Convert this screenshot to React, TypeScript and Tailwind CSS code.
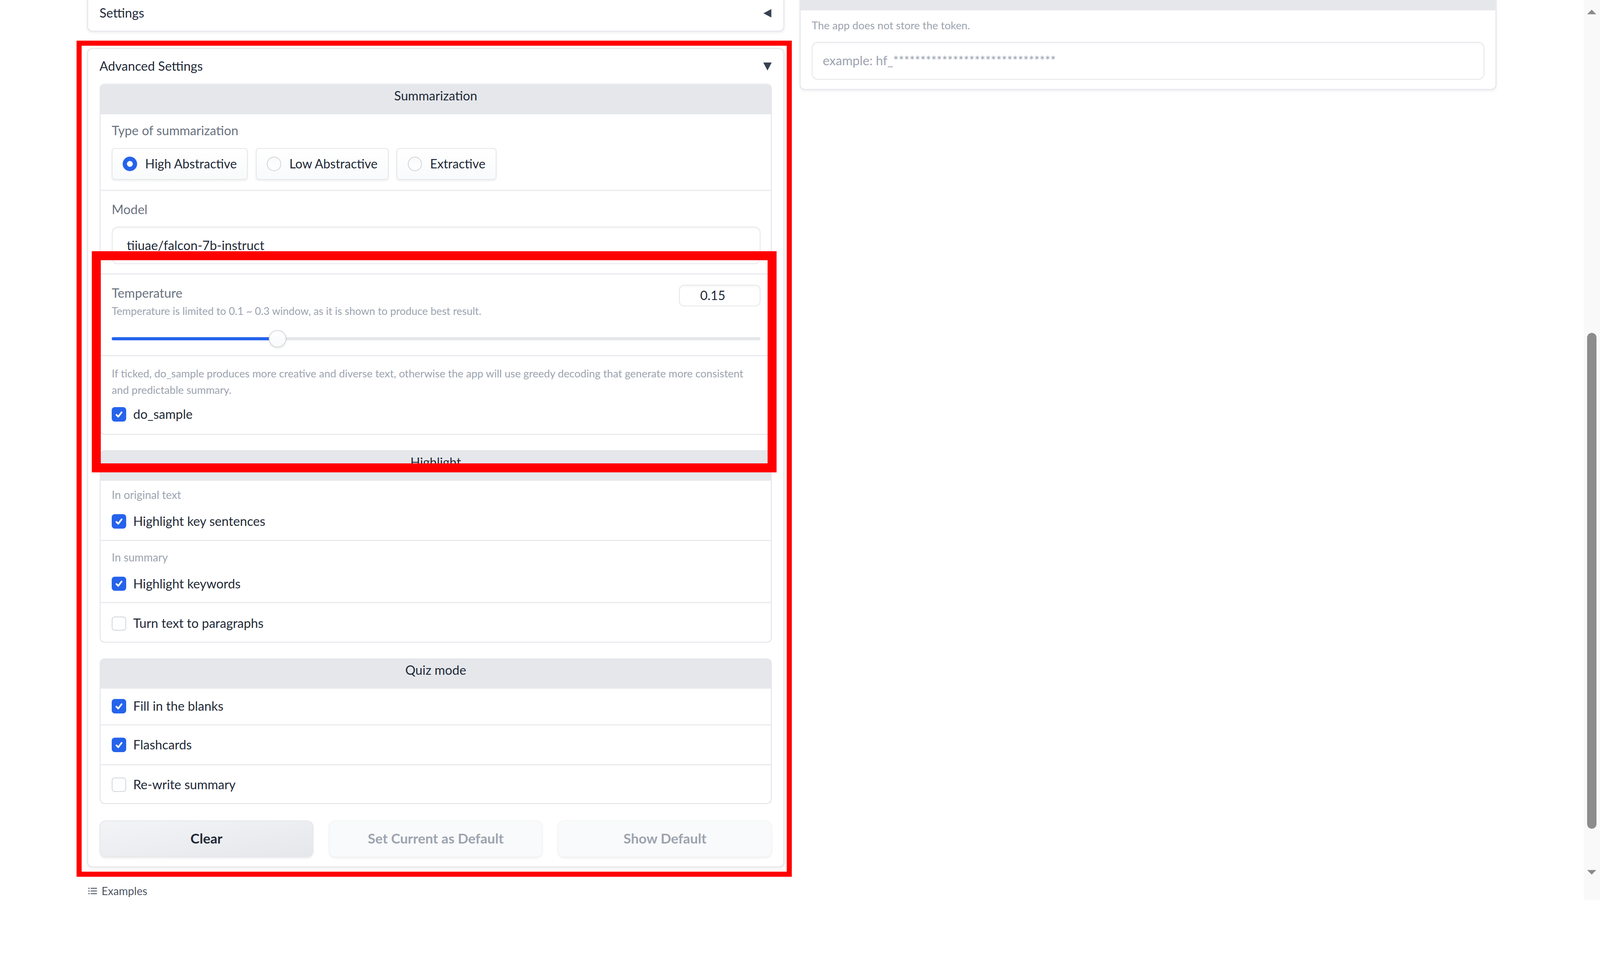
import React, { useEffect, useState } from "react";

// the layout is drawn on a 1568px wide sheet and zoomed to fill the window
const SHEET_W = 1568;

function useSheetZoom() {
  const [zoom, setZoom] = useState(() => (typeof window === "undefined" ? 1 : window.innerWidth / SHEET_W));
  useEffect(() => {
    const onResize = () => setZoom(window.innerWidth / SHEET_W);
    window.addEventListener("resize", onResize);
    return () => window.removeEventListener("resize", onResize);
  }, []);
  return zoom;
}

function Caret({ dir }: { dir: "left" | "down" }) {
  if (dir === "left") {
    return (
      <svg viewBox="0 0 10 10" className="h-[10px] w-[9px]" fill="#374151">
        <path d="M9.2 0.4 L0.6 5 L9.2 9.6 Z" />
      </svg>
    );
  }
  return (
    <svg viewBox="0 0 10 10" className="h-[9px] w-[9px]" fill="#374151">
      <path d="M0.4 0.8 L9.6 0.8 L5 9.6 Z" />
    </svg>
  );
}

function Checkbox({ label, checked }: { label: string; checked?: boolean }) {
  return (
    <div className="flex h-[16px] items-center gap-[7px]">
      {checked ? (
        <span className="flex h-[14px] w-[14px] items-center justify-center rounded-[3px] bg-[#2563eb]">
          <svg viewBox="0 0 16 16" className="h-[12px] w-[12px]" fill="none" stroke="#ffffff" strokeWidth="2.2" strokeLinecap="round" strokeLinejoin="round">
            <path d="M4.6 8.6 L7 11 L11.4 5.2" />
          </svg>
        </span>
      ) : (
        <span className="h-[14px] w-[14px] rounded-[3px] border border-[#d1d5db] bg-white" />
      )}
      <span className="text-[12.5px] text-[#1f2937]">{label}</span>
    </div>
  );
}

function Radio({ label, checked }: { label: string; checked?: boolean }) {
  return (
    <div className="flex h-[31px] items-center gap-[8px] rounded-[3px] border border-[#e5e7eb] bg-gradient-to-b from-white to-[#f9fafb] px-[10px] shadow-[0_1px_2px_rgba(0,0,0,0.07)]">
      {checked ? (
        <span className="h-[14px] w-[14px] rounded-full border-[4.5px] border-[#2563eb] bg-white" />
      ) : (
        <span className="h-[14px] w-[14px] rounded-full border border-[#d1d5db] bg-gradient-to-b from-[#f9fafb] to-white" />
      )}
      <span className="text-[12.3px] text-[#1f2937]">{label}</span>
    </div>
  );
}

function Group({ title, children }: { title: string; children: React.ReactNode }) {
  return (
    <div className="rounded-[5px] bg-white p-px shadow-[inset_0_0_0_1px_#e5e7eb]">
      <div className="overflow-hidden rounded-[4px]">
        <div className="flex h-[28px] items-center justify-center bg-[#e5e7eb] pb-[6px] text-[12.5px] text-[#1f2937]">{title}</div>
        {children}
      </div>
    </div>
  );
}

function Block({ className, children }: { className: string; children: React.ReactNode }) {
  return <div className={`pl-[11px] pr-[10px] shadow-[inset_0_1px_0_#e5e7eb] ${className}`}>{children}</div>;
}

function Scrollbar() {
  return (
    <div className="flex w-[16px] shrink-0 flex-col items-center bg-[#f9f9f9]">
      <svg viewBox="0 0 10 5" className="mt-[9px] h-[5px] w-[9px]" fill="#8b8b8b">
        <path d="M0 5 L5 0 L10 5 Z" />
      </svg>
      <div className="mt-[312px] h-[486px] w-[9px] rounded-full bg-[#8c8c8c]" />
      <svg viewBox="0 0 10 5" className="mt-[40px] h-[5px] w-[9px]" fill="#8b8b8b">
        <path d="M0 0 L10 0 L5 5 Z" />
      </svg>
    </div>
  );
}

export default function App() {
  const zoom = useSheetZoom();
  return (
    <div
      className="relative flex h-[882px] w-[1568px] overflow-hidden bg-white text-[#1f2937] [font-family:Lato,'Liberation_Sans',sans-serif]"
      style={{ zoom }}
    >
      <div className="min-w-0 flex-1 overflow-hidden">
        <div className="mx-auto flex w-[1381px] items-start gap-[15px]">
          {/* left column */}
          <div className="-mt-[5px] flex w-[683px] shrink-0 flex-col">
            <div className="rounded-[5px] bg-white px-[12px] py-px shadow-[inset_0_0_0_1px_#e5e7eb,0_1px_3px_rgba(0,0,0,0.07)]">
              <div className="flex h-[34px] items-center justify-between text-[12.5px]">
                <span>Settings</span>
                <Caret dir="left" />
              </div>
            </div>

            <div className="mt-[16px] rounded-[5px] bg-white px-[12px] pb-[10px] pt-px shadow-[inset_0_0_0_1px_#e5e7eb,0_1px_3px_rgba(0,0,0,0.07)]">
              <div className="flex h-[34px] items-center justify-between text-[12.5px]">
                <span>Advanced Settings</span>
                <Caret dir="down" />
              </div>

              <div className="flex flex-col gap-[15px]">
                <Group title="Summarization">
                  <Block className="pb-[10px] pt-[9px]">
                    <div className="text-[12.5px] leading-[16px] text-[#6b7280]">Type of summarization</div>
                    <div className="mt-[9px] flex gap-[8px]">
                      <Radio label="High Abstractive" checked />
                      <Radio label="Low Abstractive" />
                      <Radio label="Extractive" />
                    </div>
                  </Block>
                  <Block className="pb-[9px] pt-[11px]">
                    <div className="text-[12.5px] leading-[16px] text-[#6b7280]">Model</div>
                    <div className="mt-[9px] flex h-[37px] items-center rounded-[6px] border border-[#e5e7eb] bg-white px-[14px] text-[12.5px] shadow-[inset_0_1px_2px_rgba(0,0,0,0.04)]">
                      tiiuae/falcon-7b-instruct
                    </div>
                  </Block>
                  <Block className="pb-[7px] pt-[11px]">
                    <div className="flex items-start justify-between">
                      <div>
                        <div className="text-[12.5px] leading-[16px] text-[#6b7280]">Temperature</div>
                        <div className="mt-[3px] text-[10.3px] leading-[14px] text-[#9ca3af]">
                          Temperature is limited to 0.1 ~ 0.3 window, as it is shown to produce best result.
                        </div>
                      </div>
                      <div className="flex h-[21px] w-[80px] items-center justify-center rounded-[5px] border border-[#e5e7eb] bg-white pr-[14px] text-[12.5px] text-[#1f2937] shadow-[inset_0_1px_2px_rgba(0,0,0,0.04)]">
                        0.15
                      </div>
                    </div>
                    <div className="relative mt-[11px] h-[18px]">
                      <div className="absolute left-0 right-0 top-[7.5px] h-[3px] rounded-full bg-[#e5e7eb]" />
                      <div className="absolute left-0 top-[7.5px] h-[3px] w-[156px] rounded-full bg-[#2563eb]" />
                      <div className="absolute left-[154px] top-[0.5px] h-[17px] w-[17px] rounded-full border border-[#d1d5db] bg-gradient-to-b from-white to-[#f9fafb] shadow-[0_1px_2px_rgba(0,0,0,0.1)]" />
                    </div>
                  </Block>
                  <Block className="pb-[11px] pt-[10px]">
                    <div className="text-[10.45px] leading-[16px] text-[#9ca3af]">
                      If ticked, do_sample produces more creative and diverse text, otherwise the app will use greedy decoding that generate more consistent
                      <br />
                      and predictable summary.
                    </div>
                    <div className="mt-[8px]">
                      <Checkbox label="do_sample" checked />
                    </div>
                  </Block>
                </Group>

                <Group title="Highlight">
                  <Block className="pb-[10px] pt-[8px]">
                    <div className="text-[10.8px] leading-[14px] text-[#9ca3af]">In original text</div>
                    <div className="mt-[11px]">
                      <Checkbox label="Highlight key sentences" checked />
                    </div>
                  </Block>
                  <Block className="pb-[10px] pt-[10px]">
                    <div className="text-[10.8px] leading-[14px] text-[#9ca3af]">In summary</div>
                    <div className="mt-[11px]">
                      <Checkbox label="Highlight keywords" checked />
                    </div>
                  </Block>
                  <Block className="pb-[10px] pt-[13px]">
                    <Checkbox label="Turn text to paragraphs" />
                  </Block>
                </Group>

                <Group title="Quiz mode">
                  <Block className="pb-[10px] pt-[10px]">
                    <Checkbox label="Fill in the blanks" checked />
                  </Block>
                  <Block className="pb-[11px] pt-[12px]">
                    <Checkbox label="Flashcards" checked />
                  </Block>
                  <Block className="pb-[10px] pt-[12px]">
                    <Checkbox label="Re-write summary" />
                  </Block>
                </Group>
              </div>

              <div className="mt-[16px] grid h-[36px] grid-cols-3 gap-[15px] text-[13.5px] font-bold">
                <button className="rounded-[6px] border border-[#e5e7eb] bg-gradient-to-br from-[#f3f4f6] to-[#e5e7eb] text-[#1f2937] shadow-[0_1px_2px_rgba(0,0,0,0.08)]">
                  Clear
                </button>
                <button className="rounded-[6px] border border-[#f3f4f6] bg-[#f9fafb] text-[#9ca3af] shadow-[0_1px_2px_rgba(0,0,0,0.06)]">
                  Set Current as Default
                </button>
                <button className="rounded-[6px] border border-[#f3f4f6] bg-[#f9fafb] text-[#9ca3af] shadow-[0_1px_2px_rgba(0,0,0,0.06)]">
                  Show Default
                </button>
              </div>
            </div>

            <div className="mt-[16px] flex h-[14px] items-center gap-[4px] pl-[1px] text-[10.8px] text-[#4b5563]">
              <svg viewBox="0 0 10 8" className="h-[8px] w-[9px]" fill="#6b7280">
                <rect x="0" y="0.5" width="1.5" height="1.2" />
                <rect x="2.5" y="0.5" width="7" height="1.2" />
                <rect x="0" y="3.4" width="1.5" height="1.2" />
                <rect x="2.5" y="3.4" width="7" height="1.2" />
                <rect x="0" y="6.3" width="1.5" height="1.2" />
                <rect x="2.5" y="6.3" width="7" height="1.2" />
              </svg>
              <span>Examples</span>
            </div>
          </div>

          {/* right column */}
          <div className="-mt-[20px] w-[683px] shrink-0">
            <div className="rounded-[5px] bg-white p-px shadow-[inset_0_0_0_1px_#e5e7eb,0_1px_3px_rgba(0,0,0,0.07)]">
              <div className="overflow-hidden rounded-[4px]">
                <div className="h-[28px] bg-[#e5e7eb]" />
                <div className="px-[11px] pb-[9px] pt-[9px] shadow-[inset_0_1px_0_#e5e7eb]">
                  <div className="text-[10.5px] leading-[14px] text-[#9ca3af]">The app does not store the token.</div>
                  <div className="mt-[9px] flex h-[37px] items-center rounded-[6px] border border-[#e5e7eb] bg-white px-[10px] text-[12.5px] text-[#9ca3af] shadow-[inset_0_1px_2px_rgba(0,0,0,0.04)]">
                    example: hf_******************************
                  </div>
                </div>
              </div>
            </div>
          </div>
        </div>
      </div>

      <Scrollbar />

      {/* red annotation frames */}
      <div className="pointer-events-none absolute left-[75px] top-[40px] h-[819px] w-[701px] border-[5px] border-[#ff0000]" />
      <div className="pointer-events-none absolute left-[90px] top-[246px] h-[217px] w-[671px] border-[9px] border-[#ff0000]" />
    </div>
  );
}
